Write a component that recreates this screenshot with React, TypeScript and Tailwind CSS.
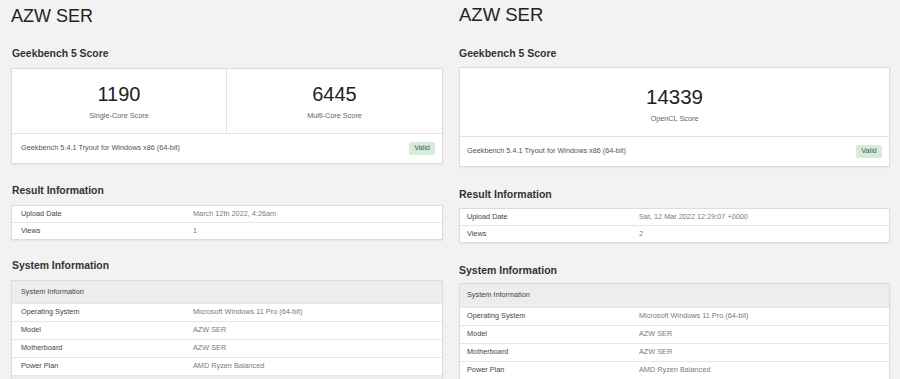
import React from 'react';

type Row = { label: string; value: string };

const resultLeft: Row[] = [
  { label: 'Upload Date', value: 'March 12th 2022, 4:26am' },
  { label: 'Views', value: '1' },
];

const resultRight: Row[] = [
  { label: 'Upload Date', value: 'Sat, 12 Mar 2022 12:29:07 +0000' },
  { label: 'Views', value: '2' },
];

const systemRows: Row[] = [
  { label: 'Operating System', value: 'Microsoft Windows 11 Pro (64-bit)' },
  { label: 'Model', value: 'AZW SER' },
  { label: 'Motherboard', value: 'AZW SER' },
  { label: 'Power Plan', value: 'AMD Ryzen Balanced' },
];

function Heading({ children, className }: { children: React.ReactNode; className: string }) {
  return (
    <h2 className={`h-[14px] flex items-center font-bold text-[#333] leading-[14px] ${className}`}>
      {children}
    </h2>
  );
}

function Footer({ px }: { px: string }) {
  return (
    <div className={`h-[30px] border-t border-[#e3e3e3] flex items-center justify-between ${px}`}>
      <span className="text-[7.3px] text-[#555]">Geekbench 5.4.1 Tryout for Windows x86 (64-bit)</span>
      <span className="h-[13px] w-[26px] rounded-[2px] bg-[#d6ecdb] text-[#4d5a50] text-[7.3px] flex items-center justify-center">
        Valid
      </span>
    </div>
  );
}

function InfoRows({ rows, pl, valueCol }: { rows: Row[]; pl: string; valueCol: string }) {
  return (
    <>
      {rows.map((r, i) => (
        <div
          key={r.label}
          className={`flex items-center text-[7.3px] ${pl} ${i > 0 ? 'h-[17px] border-t border-[#e6e6e6]' : 'h-[16px]'}`}
        >
          <span className={`text-[#444] ${valueCol}`}>{r.label}</span>
          <span className="text-[#7a7a7a]">{r.value}</span>
        </div>
      ))}
    </>
  );
}

function SystemCard({ pl, valueCol, headerH, mt }: { pl: string; valueCol: string; headerH: string; mt: string }) {
  return (
    <div className={`${mt} bg-white border border-[#dcdcdc] shadow-[0_1px_2px_rgba(0,0,0,0.06)]`}>
      <div className={`${headerH} bg-[#ededed] flex items-center text-[7.3px] text-[#444] ${pl}`}>
        System Information
      </div>
      {systemRows.map((r) => (
        <div key={r.label} className={`h-[18px] border-t border-[#e6e6e6] flex items-center text-[7.3px] ${pl}`}>
          <span className={`text-[#444] ${valueCol}`}>{r.label}</span>
          <span className="text-[#7a7a7a]">{r.value}</span>
        </div>
      ))}
      <div className="h-[20px] border-t border-[#e6e6e6] bg-[#ededed]" />
    </div>
  );
}

export default function App() {
  return (
    <div
      className="w-[900px] h-[379px] overflow-hidden bg-[#f2f2f2] flex"
      style={{ fontFamily: '"Liberation Sans", Arial, sans-serif' }}
    >
      {/* left result */}
      <div className="w-[450px] shrink-0 pl-[11px] pr-[7px] pt-[4px]">
        <h1 className="h-[24px] flex items-center text-[18px] leading-[24px] text-[#222]">AZW SER</h1>

        <Heading className="mt-[19px] text-[10.4px] ml-[1px]">Geekbench 5 Score</Heading>
        <div className="mt-[7px] bg-white border border-[#dcdcdc] shadow-[0_1px_2px_rgba(0,0,0,0.06)]">
          <div className="h-[64px] grid grid-cols-2">
            <div className="flex flex-col items-center pt-[15px] border-r border-[#e3e3e3]">
              <span className="text-[20px] leading-[20px] text-[#222]">1190</span>
              <span className="mt-[7px] text-[7.3px] leading-[10px] text-[#666]">Single-Core Score</span>
            </div>
            <div className="flex flex-col items-center pt-[15px]">
              <span className="text-[20px] leading-[20px] text-[#222]">6445</span>
              <span className="mt-[7px] text-[7.3px] leading-[10px] text-[#666]">Multi-Core Score</span>
            </div>
          </div>
          <Footer px="pl-[9px] pr-[7px]" />
        </div>

        <Heading className="mt-[20px] text-[10.4px] ml-[1px]">Result Information</Heading>
        <div className="mt-[7px] bg-white border border-[#dcdcdc] shadow-[0_1px_2px_rgba(0,0,0,0.06)]">
          <InfoRows rows={resultLeft} pl="pl-[9px]" valueCol="w-[172px]" />
        </div>

        <Heading className="mt-[19px] text-[10.4px] ml-[1px]">System Information</Heading>
        <SystemCard mt="mt-[7px]" pl="pl-[9px]" valueCol="w-[172px]" headerH="h-[22px]" />
      </div>

      {/* right result */}
      <div className="w-[450px] shrink-0 pl-[9px] pr-[10px] pt-[3px]">
        <h1 className="h-[24px] flex items-center text-[18.5px] leading-[24px] text-[#222]">AZW SER</h1>

        <Heading className="mt-[19px] text-[10.5px]">Geekbench 5 Score</Heading>
        <div className="mt-[7px] bg-white border border-[#dcdcdc] shadow-[0_1px_2px_rgba(0,0,0,0.06)]">
          <div className="h-[68px] flex flex-col items-center pt-[18px]">
            <span className="text-[20.5px] leading-[21px] text-[#222]">14339</span>
            <span className="mt-[7px] text-[7.3px] leading-[10px] text-[#666]">OpenCL Score</span>
          </div>
          <Footer px="pl-[7px] pr-[7px]" />
        </div>

        <Heading className="mt-[20px] text-[10.5px]">Result Information</Heading>
        <div className="mt-[7px] bg-white border border-[#dcdcdc] shadow-[0_1px_2px_rgba(0,0,0,0.06)]">
          <InfoRows rows={resultRight} pl="pl-[7px]" valueCol="w-[172px]" />
        </div>

        <Heading className="mt-[20px] text-[10.5px]">System Information</Heading>
        <SystemCard mt="mt-[6px]" pl="pl-[7px]" valueCol="w-[172px]" headerH="h-[23px]" />
      </div>
    </div>
  );
}
